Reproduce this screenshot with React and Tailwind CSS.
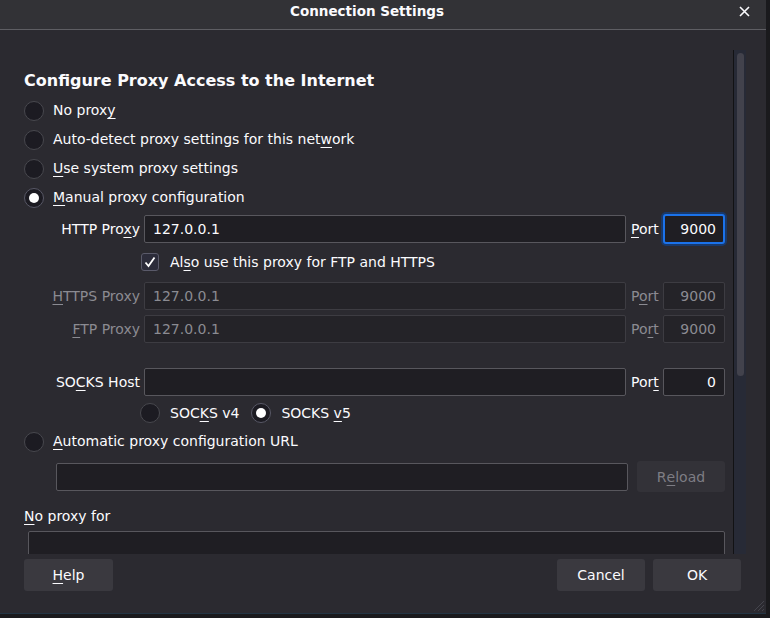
import React from "react";

const U = ({ children }) => (
  <span className="underline underline-offset-[3px] decoration-1">{children}</span>
);

function Radio({ checked }) {
  return (
    <span
      className={
        checked
          ? "w-5 h-5 rounded-full border border-[#585866] bg-[#1c1b22] flex items-center justify-center shrink-0"
          : "w-5 h-5 rounded-full border border-[#48484e] bg-[#1c1b22] flex items-center justify-center shrink-0"
      }
    >
      {checked && <span className="w-[10px] h-[10px] rounded-full bg-white" />}
    </span>
  );
}

function Field({ value, disabled, right, className }) {
  const base = disabled
    ? "bg-[#242328] border border-[#3d3c42] text-[#8b8b92]"
    : "bg-[#1f1e23] border border-[#58575d] text-[#fbfbfe]";
  return (
    <div
      className={`${base} rounded-[2px] h-[28px] flex items-center shrink-0 ${
        right ? "justify-end pr-[8px]" : "pl-[8px]"
      } ${className}`}
    >
      {value}
    </div>
  );
}

function ProxyRow({ label, value, port, disabled, focused, portLabel, className }) {
  return (
    <div className={`flex items-center h-[30px] ${className}`}>
      <div className={`w-[116px] text-right ${disabled ? "text-[#8b8b92]" : ""}`}>{label}</div>
      <Field value={value} disabled={disabled} className="ml-[4px] w-[482px]" />
      <div className={`ml-[5px] w-[32px] ${disabled ? "text-[#8b8b92]" : ""}`}>{portLabel}</div>
      {focused ? (
        <div className="w-[62px] h-[30px] rounded-[3px] border-2 border-[#1b72ea] bg-[#1f1e23] shadow-[0_0_0_2px_#19396a] flex items-center justify-end pr-[7px]">
          {port}
        </div>
      ) : (
        <Field value={port} disabled={disabled} right className="w-[62px]" />
      )}
    </div>
  );
}

export default function App() {
  return (
    <div className="w-[770px] h-[618px] bg-[#1a1a1d] font-['DejaVu_Sans',sans-serif] text-[14px] text-[#fbfbfe] overflow-hidden">
      <div className="w-[766px] h-[614px] bg-[#2b2a30] flex flex-col border-b border-[#233544] relative">
        {/* Title bar */}
        <div className="h-[30px] shrink-0 bg-[#323236] border-b border-[#5e5e63] flex items-start">
          <div className="flex-1 flex justify-center pl-[2px] pt-[3px] font-bold text-[13.5px] leading-[17px]">
            Connection Settings
          </div>
          <div className="w-[34px] pt-[6px] pl-[7px]">
            <svg width="11" height="11" viewBox="0 0 11 11">
              <path d="M1 1 L10 10 M10 1 L1 10" stroke="#fbfbfe" strokeWidth="1.6" />
            </svg>
          </div>
        </div>

        {/* Scroll region */}
        <div className="mt-[20px] h-[504px] flex shrink-0">
          <div className="w-[733px] overflow-hidden pl-[24px] pr-[8px]">
            <div className="mt-[19px] mb-[3px] h-[24px] leading-[24px] text-[16px] font-bold">
              Configure Proxy Access to the Internet
            </div>
            <div className="h-[29px] flex items-center gap-[9px]">
              <Radio />
              <span>No prox<U>y</U></span>
            </div>
            <div className="h-[29px] flex items-center gap-[9px]">
              <Radio />
              <span>Auto-detect proxy settings for this net<U>w</U>ork</span>
            </div>
            <div className="h-[29px] flex items-center gap-[9px]">
              <Radio />
              <span><U>U</U>se system proxy settings</span>
            </div>
            <div className="h-[29px] flex items-center gap-[9px]">
              <Radio checked />
              <span><U>M</U>anual proxy configuration</span>
            </div>

            <ProxyRow
              className="mt-[2px]"
              label={<>HTTP Pro<U>x</U>y</>}
              value="127.0.0.1"
              portLabel={<><U>P</U>ort</>}
              port="9000"
              focused
            />

            <div className="h-[36px] flex items-center ml-[117px] gap-[11px]">
              <span className="w-[18px] h-[18px] rounded-[3px] border border-[#5a5a6a] bg-[#2c2c3a] flex items-center justify-center">
                <svg width="14" height="14" viewBox="0 0 14 14">
                  <path d="M2.5 7.5 L5.5 11 L11.5 2.5" fill="none" stroke="#ffffff" strokeWidth="1.8" />
                </svg>
              </span>
              <span>Al<U>s</U>o use this proxy for FTP and HTTPS</span>
            </div>

            <ProxyRow
              className="mt-[1px]"
              label={<><U>H</U>TTPS Proxy</>}
              value="127.0.0.1"
              portLabel={<>P<U>o</U>rt</>}
              port="9000"
              disabled
            />
            <ProxyRow
              className="mt-[3px]"
              label={<><U>F</U>TP Proxy</>}
              value="127.0.0.1"
              portLabel={<>Po<U>r</U>t</>}
              port="9000"
              disabled
            />
            <ProxyRow
              className="mt-[23px]"
              label={<>SO<U>C</U>KS Host</>}
              value=""
              portLabel={<>Por<U>t</U></>}
              port="0"
            />

            <div className="h-[28px] mt-[2px] flex items-center ml-[116px]">
              <Radio />
              <span className="ml-[10px]">SOC<U>K</U>S v4</span>
              <span className="ml-[12px]"><Radio checked /></span>
              <span className="ml-[10px]">SOCKS <U>v</U>5</span>
            </div>

            <div className="h-[29px] flex items-center gap-[9px]">
              <Radio />
              <span><U>A</U>utomatic proxy configuration URL</span>
            </div>

            <div className="mt-[5px] h-[31px] flex items-center">
              <Field value="" className="ml-[32px] w-[572px]" />
              <div className="ml-[9px] w-[88px] h-[31px] pt-[1px] rounded-[3px] bg-[#333238] text-[#7e7d84] flex items-center justify-center">
                R<U>e</U>load
              </div>
            </div>

            <div className="mt-[12px] h-[24px] flex items-center">
              <span><U>N</U>o proxy for</span>
            </div>
            <div className="mt-[3px] ml-[4px] w-[697px] h-[60px] bg-[#1f1e23] border border-[#58575d] rounded-[2px]" />
          </div>
          <div className="w-[1px] bg-[#121214]" />
          <div className="w-[12px] bg-[#272a36] pt-[3px] flex justify-center">
            <div className="w-[7px] h-[323px] rounded-full bg-[#42424c]" />
          </div>
        </div>

        {/* Footer */}
        <div className="flex-1 flex items-start pt-[5px] pl-[24px] pr-[25px]">
          <div className="w-[89px] h-[32px] rounded-[3px] bg-[#3a393f] flex items-center justify-center">
            <U>H</U>elp
          </div>
          <div className="ml-auto w-[88px] h-[32px] rounded-[3px] bg-[#3a393f] flex items-center justify-center">
            Cancel
          </div>
          <div className="ml-[8px] w-[88px] h-[32px] rounded-[3px] bg-[#3a393f] flex items-center justify-center">
            OK
          </div>
        </div>

        {/* resize grip */}
        <svg className="absolute right-[1px] bottom-[1px]" width="14" height="14" viewBox="0 0 14 14">
          <path d="M13 3 L3 13 M13 7 L7 13 M13 11 L11 13" stroke="#44444c" strokeWidth="1" />
        </svg>
      </div>
    </div>
  );
}
